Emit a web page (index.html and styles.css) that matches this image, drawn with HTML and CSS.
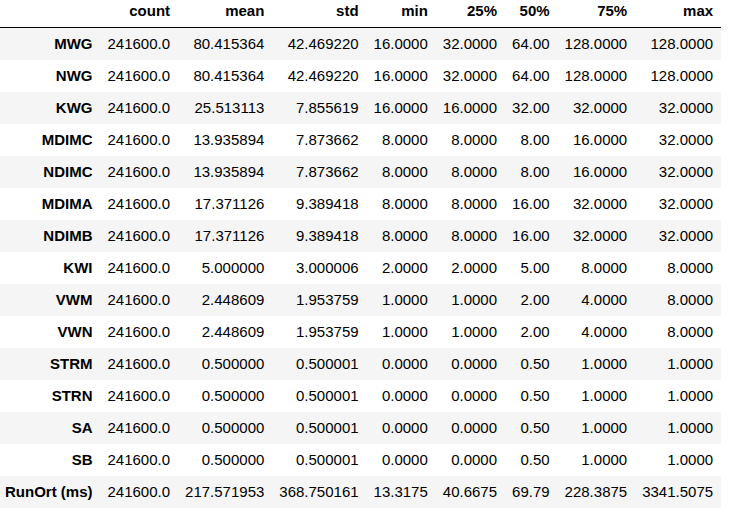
FILE: index.html
```html
<!DOCTYPE html>
<html>
<head>
<meta charset="utf-8">
<link rel="stylesheet" href="styles.css">
</head>
<body>
<table class="df">
<thead>
<tr><th></th><th>count</th><th>mean</th><th>std</th><th>min</th><th>25%</th><th>50%</th><th>75%</th><th>max</th></tr>
</thead>
<tbody>
<tr><th>MWG</th><td>241600.0</td><td>80.415364</td><td>42.469220</td><td>16.0000</td><td>32.0000</td><td>64.00</td><td>128.0000</td><td>128.0000</td></tr>
<tr><th>NWG</th><td>241600.0</td><td>80.415364</td><td>42.469220</td><td>16.0000</td><td>32.0000</td><td>64.00</td><td>128.0000</td><td>128.0000</td></tr>
<tr><th>KWG</th><td>241600.0</td><td>25.513113</td><td>7.855619</td><td>16.0000</td><td>16.0000</td><td>32.00</td><td>32.0000</td><td>32.0000</td></tr>
<tr><th>MDIMC</th><td>241600.0</td><td>13.935894</td><td>7.873662</td><td>8.0000</td><td>8.0000</td><td>8.00</td><td>16.0000</td><td>32.0000</td></tr>
<tr><th>NDIMC</th><td>241600.0</td><td>13.935894</td><td>7.873662</td><td>8.0000</td><td>8.0000</td><td>8.00</td><td>16.0000</td><td>32.0000</td></tr>
<tr><th>MDIMA</th><td>241600.0</td><td>17.371126</td><td>9.389418</td><td>8.0000</td><td>8.0000</td><td>16.00</td><td>32.0000</td><td>32.0000</td></tr>
<tr><th>NDIMB</th><td>241600.0</td><td>17.371126</td><td>9.389418</td><td>8.0000</td><td>8.0000</td><td>16.00</td><td>32.0000</td><td>32.0000</td></tr>
<tr><th>KWI</th><td>241600.0</td><td>5.000000</td><td>3.000006</td><td>2.0000</td><td>2.0000</td><td>5.00</td><td>8.0000</td><td>8.0000</td></tr>
<tr><th>VWM</th><td>241600.0</td><td>2.448609</td><td>1.953759</td><td>1.0000</td><td>1.0000</td><td>2.00</td><td>4.0000</td><td>8.0000</td></tr>
<tr><th>VWN</th><td>241600.0</td><td>2.448609</td><td>1.953759</td><td>1.0000</td><td>1.0000</td><td>2.00</td><td>4.0000</td><td>8.0000</td></tr>
<tr><th>STRM</th><td>241600.0</td><td>0.500000</td><td>0.500001</td><td>0.0000</td><td>0.0000</td><td>0.50</td><td>1.0000</td><td>1.0000</td></tr>
<tr><th>STRN</th><td>241600.0</td><td>0.500000</td><td>0.500001</td><td>0.0000</td><td>0.0000</td><td>0.50</td><td>1.0000</td><td>1.0000</td></tr>
<tr><th>SA</th><td>241600.0</td><td>0.500000</td><td>0.500001</td><td>0.0000</td><td>0.0000</td><td>0.50</td><td>1.0000</td><td>1.0000</td></tr>
<tr><th>SB</th><td>241600.0</td><td>0.500000</td><td>0.500001</td><td>0.0000</td><td>0.0000</td><td>0.50</td><td>1.0000</td><td>1.0000</td></tr>
<tr><th>RunOrt (ms)</th><td>241600.0</td><td>217.571953</td><td>368.750161</td><td>13.3175</td><td>40.6675</td><td>69.79</td><td>228.3875</td><td>3341.5075</td></tr>
</tbody>
</table>
</body>
</html>
```
FILE: styles.css
```css
html, body {
  margin: 0;
  padding: 0;
  background: #fff;
}
.df {
  border-collapse: collapse;
  border-spacing: 0;
  font-family: "Liberation Sans", Arial, sans-serif;
  font-size: 15px;
  color: #000;
}
.df th, .df td {
  text-align: right;
  vertical-align: middle;
  padding: 7.5px 7.5px;
  line-height: normal;
  white-space: nowrap;
  border: none;
}
.df th {
  font-weight: bold;
}
.df thead {
  border-bottom: 1px solid #000;
}
.df thead th {
  padding-top: 2px;
}
.df tr > th:first-child {
  padding-left: 5px;
}
.df tbody tr:nth-child(odd) {
  background: #f5f5f5;
}
```
